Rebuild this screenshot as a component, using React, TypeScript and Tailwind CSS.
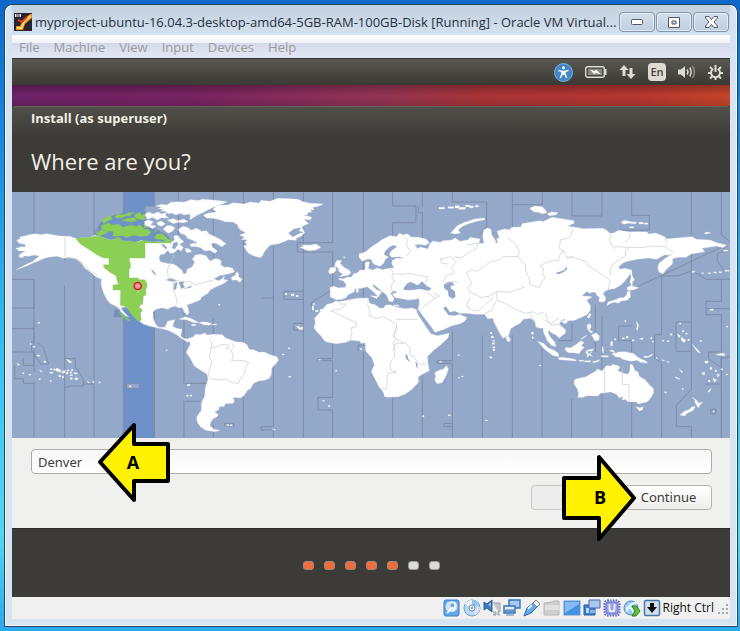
import React, { useState } from 'react';

const menuItems = ['File', 'Machine', 'View', 'Input', 'Devices', 'Help'];

// meridian strips, in map units
const meridians = [
  'M66 0V152M66 262V520H34V500M66 570V738',
  'M158 134V206M158 280V738M246 0V130M246 246V738M427 342V738M516 354V574M516 626V738',
  'M499 0V180M604 0V236M604 380V440M604 700V738M694 0V738M784 0V704H748V714H784V738',
  'M874 0V738M962 0V152H856V180H962V292L898 332V358M962 450V500H918V506H962V616H918V654H962V738',
  'M1054 0V460H1038V478M1054 478V738M1142 616V738M1142 0V42H1212V92H1142V130M1231 0V44M1219 44V62H1231V144M1231 550V738',
  'M1321 0V30H1424V104L1400 130M1321 420V506H1276V514H1321V738M1411 430V738M1501 0V110M1501 430V738M1501 38H1591V0M1590 470V738',
  'M1680 0V72H1770V0M1680 394V446H1640M1679 620V738M1859 0V70H1912V114H1822M1859 400V402H1820V446H1859V480M1859 630V738',
  'M1949 252V428H1928V498L1949 514V738M2038 0V140M2038 184V478H1992V390H2038M2038 478V592L1993 640V704H2038V738M2128 0V128L2150 146M2128 262V328H2082V368H2128V404M2128 484V738',
  'M1864 290L2136 162V176L2116 186V206L2136 238M1949 252H1996L2040 236L2084 262H2152M2084 350H2152M2128 404V740M2152 494L2128 500V528L2090 500V480H2128M2082 576H2128',
  'M0 262H66V348H0M0 410H66V450H58V475L86 516H110L94 466L74 450M0 480H66V540M8 520V560H34V574H66M158 500H190V524L214 560V576H246M158 588L176 582H214V576M518 574H586M518 628H564M748 704V714M750 318H784M816 298H874M816 298V322H874M845 394H874M845 394V414H874M1296 694H1322V704H1296ZM1750 338V480M1770 372H1770V738M1591 372L1640 404M2096 652H2112V666H2096ZM638 694H664V702H638Z',
];

const land = {
  // North America
  west: [
    'M20 150L32 146 28 141 45 138 58 134 75 131 92 134 110 131 150 138 178 139 200 146 225 142 238 144 252 136 275 141 300 150 330 147 342 154 360 153 372 158 395 151 410 158 445 155 482 158 482 180 470 184 463 192 450 194 447 205 452 216 475 221 490 222 503 230 516 241 520 251 528 251 532 238 546 231 554 216 547 208 555 196 570 193 588 197 595 207 602 214 612 206 626 207 634 214 632 224 643 232 655 231 668 235 674 245 662 250 640 255 625 267 610 270 628 267 644 259 640 268 654 271 640 281 617 291 600 300 594 310 575 321 570 330 550 338 531 345 535 357 537 369 531 375 523 362 515 352 507 354 497 349 481 352 475 358 455 353 438 358 429 366 430 385 436 402 446 412 465 412 473 394 494 389 488 409 500 415 516 418 512 438 521 445 535 448 548 441 558 446 555 454 545 451 533 456 523 450 511 443 501 435 480 423 463 418 450 415 420 409 400 402 390 395 384 378 366 370 357 358 347 349 332 354 342 367 356 381 347 378 333 366 326 354 315 347 300 340 291 329 281 309 275 292 273 277 275 268 257 260 244 248 225 235 213 218 199 207 180 203 160 205 143 199 124 200 105 204 90 211 71 218 50 228 18 240 45 225 67 215 80 205 88 198 73 195 57 199 42 198 36 204 25 198 34 190 47 183 27 183 17 175 36 170 47 171 45 163 27 160Z',
    'M404 75L415 66 430 72 444 66 455 72 470 67 466 76 476 84 454 83 442 90 428 82 413 88ZM404 94L418 90 430 96 421 105 438 108 427 116 415 108 404 112ZM437 48L455 43 470 45 483 37 505 35 522 37 540 30 560 33 577 28 603 30 630 32 651 35 638 41 620 45 605 50 590 51 572 61 556 63 545 71 522 75 512 70 498 75 485 69 475 71 465 63 452 64 461 58 445 56 455 51ZM472 90L490 86 504 92 521 88 534 94 521 98 505 97 490 101ZM440 98L452 93 466 101 455 109 444 105ZM460 118L470 107 484 107 495 114 487 124 475 130ZM505 118L520 109 535 113 543 121 560 115 575 124 589 122 598 133 613 139 632 149 648 161 635 170 618 160 603 160 608 172 622 183 614 190 600 181 585 183 572 173 554 169 561 157 548 151 533 145 526 135 511 130ZM482 158L494 150 491 138 503 136 511 146 522 155 508 163 520 172 514 183 503 178 493 188 480 190 475 182ZM525 175L538 177 545 185 530 188ZM539 160L557 158 555 169 543 170ZM664 262L675 257 680 245 687 252 684 259 696 268 690 277 680 270 666 271Z',
    'M520 362L526 361 524 370ZM507 388L526 380 545 386 562 396 548 397 530 389ZM565 399L580 395 603 401 598 406 583 402ZM545 403H557V407H545ZM608 402H619V405H608ZM626 342H630V346H626ZM84 396H89V400H84Z',
  ],
  greenland: 'M40 75L55 69 80 66 68 58 83 46 115 45 129 38 163 42 180 36 208 39 213 31 240 34 263 25 300 26 324 28 339 35 361 40 400 42 385 49 369 52 372 60 361 59 365 67 354 67 352 74 341 75 365 82 361 90 342 87 356 101 345 105 336 111 344 128 331 140 320 143 318 151 295 149 282 155 266 161 241 165 226 181 217 198 210 203 185 195 174 188 166 176 161 168 171 165 165 155 174 149 154 149 163 142 149 135 167 128 153 121 145 113 143 104 128 96 105 95 89 89 70 85 49 84ZM0 29L30 32 60 30 105 38 86 46 60 56 37 69 22 75 0 89Z',
  eurasia: [
    'M420 292L432 289 445 294 467 292 468 283 460 272 447 269 447 265 460 267 470 262 485 261 491 251 503 248 510 240 521 241 526 236 525 220 530 215 539 216 537 223 535 236 548 240 561 234 578 239 600 234 612 234 605 220 608 211 619 205 641 205 629 200 604 202 598 192 606 181 622 170 610 165 598 171 586 182 581 193 595 201 586 207 582 218 571 229 560 226 550 221 543 207 530 208 517 214 507 202 507 192 527 185 544 171 558 162 578 148 600 137 620 140 628 130 640 135 651 131 664 141 685 142 708 147 718 158 708 166 687 163 674 165 683 176 690 171 714 177 719 162 729 153 750 157 760 152 785 150 796 144 810 154 835 149 840 142 870 147 867 160 882 160 878 139 881 120 892 114 903 118 905 134 916 151 918 160 923 157 920 146 928 143 921 124 943 117 958 119 966 112 993 111 996 101 1020 97 1051 92 1058 95 1087 82 1120 87 1151 92 1153 99 1133 109 1165 113 1178 116 1238 115 1250 121 1259 130 1271 129 1286 121 1320 126 1342 125 1371 126 1376 132 1397 129 1425 141 1431 147 1460 144 1506 140 1519 148 1560 150 1580 158 1609 165 1599 173 1580 168 1561 171 1536 175 1544 185 1527 188 1505 191 1488 202 1463 202 1448 206 1447 222 1430 237 1418 252 1407 246 1403 233 1407 220 1424 206 1449 191 1436 196 1425 194 1410 202 1400 208 1374 204 1343 208 1312 214 1298 220 1285 232 1291 237 1308 235 1320 242 1319 254 1304 274 1292 286 1273 296 1260 298 1246 303 1239 311 1247 323 1245 333 1235 337 1226 334 1229 322 1219 315 1219 309 1209 306 1198 310 1192 304 1182 311 1176 318 1196 319 1206 321 1190 331 1202 348 1200 362 1191 374 1171 383 1154 391 1133 392 1121 387 1112 394 1109 403 1127 420 1126 429 1112 440 1108 444 1098 435 1084 428 1077 421 1074 428 1083 444 1094 456 1098 470 1084 466 1073 454 1061 428 1059 414 1049 415 1037 410 1035 394 1021 385 1000 388 990 400 975 407 962 416 956 436 939 445 930 431 921 413 912 397 909 385 893 386 884 373 857 373 830 370 809 370 794 363 780 366 767 348 760 355 769 367 775 376 795 377 809 373 831 383 824 394 810 401 786 407 759 419 735 427 722 408 711 394 696 374 684 358 688 344 687 325 676 328 655 330 630 325 616 323 607 313 622 306 613 302 601 310 612 324 609 335 597 334 590 315 572 301 552 284 547 287 560 299 576 306 571 311 565 321 556 311 543 299 532 290 514 295 496 296 492 306 474 314 467 324 456 328 440 329 421 321Z',
    'M436 219L441 211 455 212 450 220 464 234 474 238 483 247 476 255 448 260 459 252 446 244 445 234 434 229ZM415 246L420 234 435 231 439 240 431 249 419 251ZM330 172L343 168 335 165 360 166 378 162 392 172 378 180 356 182 342 177ZM499 293H505V307H499ZM541 317L564 319 560 326ZM612 345H627V348H612ZM461 200H464V204H461Z',
  ],
  africa: 'M437 333L448 335 470 331 502 325 535 324 539 340 555 344 570 355 581 354 586 346 599 344 620 351 644 356 666 354 680 359 680 367 696 392 709 412 723 432 743 437 778 430 773 445 751 465 731 481 712 500 714 520 718 542 704 549 684 561 686 576 666 598 646 612 624 620 595 622 584 620 580 606 567 590 557 571 544 545 553 525 546 504 527 483 526 459 513 460 509 453 482 451 469 457 439 461 420 458 405 454 391 436 379 424 372 413 376 397 373 386 388 368 398 358 411 343 426 340Z',
  south: 'M-4 84L8 84 16 73 30 74 45 69 51 75 73 73 97 74 106 83 122 90 140 96 159 97 171 104 177 118 190 119 208 127 223 126 240 134 260 140 266 150 258 161 245 174 244 194 238 205 223 211 205 213 189 221 182 236 173 240 161 258 151 264 129 262 133 275 129 280 106 281 103 289 88 290 86 299 74 305 85 314 80 321 69 326 61 338 60 347 72 358 90 361 77 365 47 361 31 350 22 336 20 321 34 301 34 280 44 258 46 234 54 208 51 192 34 182 13 168 4 150 -6 135 -11 127 -6 117 1 103Z',
};

const pacificLand = [
  'M522 212L528 207 558 200 573 191 587 184 592 176 604 183 611 178 619 167 634 168 637 163 657 168 659 174 653 182 674 191 685 193 690 181 690 165 695 162 701 171 704 181 714 186 718 199 736 210 748 225 760 235 761 248 750 267 740 276 714 282 710 276 683 275 676 268 666 270 669 258 658 264 650 253 632 246 602 250 592 258 560 257 549 262 534 262 536 250 531 235 524 225ZM708 290L720 293 730 290 727 299 718 303Z',
  'M876 262L889 270 895 279 909 277 900 284 895 294 886 280 884 269ZM886 290L878 302 862 309 854 318 840 315 853 304 867 299 876 290ZM140 167L145 178 139 196 126 218 111 221 104 210 107 199 104 188 117 181 130 177ZM318 82L324 77 332 89 327 95 321 92Z',
  'M413 94L430 100 445 114 463 121 476 131 476 140 458 136 434 118ZM474 144L486 142 517 146 529 150 527 153 501 151 478 149ZM497 112L511 114 529 103 543 92 552 98 543 107 553 112 542 123 538 131 519 128 505 128 495 119ZM556 127L561 121 582 116 576 123 561 124 567 132 577 125 571 132 578 140 568 135 561 143 562 132ZM536 151H551V154H538ZM554 152H572V156H554ZM577 155L599 149 596 154 581 159ZM628 122L639 120 646 130 656 126 675 125 702 131 712 141 725 148 737 153 743 159 721 157 711 151 695 154 680 151 668 148 660 142 646 140 641 134 635 132 645 128ZM561 45L570 41 574 51 568 60 579 66 572 69 563 58ZM574 76L588 68 598 78 597 90 585 93 578 80ZM561 22L570 9 573 15 567 25ZM483 34L499 29 504 34 496 42ZM731 139L745 139 756 132 757 136 746 142 734 143ZM542 87L560 75 559 78 546 88ZM608 108L611 120 609 131 606 120ZM604 137H625V141H604Z',
  'M271 67H276V72H271ZM274 78H280V84H274ZM278 91H284V94H278ZM276 98H284V103H276ZM278 110H285V114H278ZM279 117H284V122H279ZM269 140H276V144H269ZM119 154H124V157H119ZM174 134H178V137H174ZM174 202H178V205H174ZM184 198H190V200H184ZM68 317H72V320H68ZM144 314H151V317H144ZM256 330H263V332H256ZM418 165H423V168H418ZM395 66H400V73H395ZM396 80H400V86H396ZM709 34L716 45 712 62 709 56 712 48ZM674 31H678V35H674ZM632 95H638V107H632ZM643 86H648V90H643ZM667 83H673V87H667ZM678 79H685V84H678ZM696 89H702V93H696ZM718 87L730 83 727 89ZM752 82H756V87H752ZM757 93H761V97H757ZM787 90H791V94H787ZM802 92H807V96H802ZM838 39H843V43H838Z',
  'M831 71L842 78 837 83ZM811 71H816V76H811ZM847 61H852V66H847ZM857 69H862V73H857ZM844 82L857 90 853 98 844 91ZM863 87H868V92H863ZM898 92L906 91 903 96ZM876 103L889 115 902 129 893 126ZM948 134L962 130 975 131 973 137 957 136ZM979 48H983V52H979ZM915 153H924V159H915ZM907 187H914V194H907ZM930 172H936V178H930ZM945 180H950V185H945ZM951 192L959 194 953 202ZM938 205L950 210 943 216ZM963 176H969V179H963ZM978 192H984V195H978ZM925 210H930V216H925ZM846 235H850V239H846ZM794 245H799V249H794ZM923 244L934 235 928 247ZM825 200L840 206 838 208 827 204ZM838 177L848 186 845 188ZM801 153L808 157 803 158ZM786 148L794 152 789 153ZM768 142L773 144 770 147ZM939 303H943V306H939Z',
];

const arcticLand =
  'M152 129L161 119 171 108 190 98 207 93 223 87 253 84 255 89 233 93 205 101 188 109 174 120 182 129 165 132 151 129ZM117 52H133V57H117ZM144 50H161V55H144ZM165 47H178V54H165ZM176 52H196V58H176ZM196 45H209V50H196ZM208 48H220V53H208ZM226 46H235V51H226ZM389 55L405 48 427 50 437 61 441 68 427 71 414 67 401 65ZM442 71L455 66 474 68 466 75 448 77ZM663 97L673 91 692 95 711 97 706 101 685 100 672 103ZM717 97H730V102H717ZM733 99H744V103H733ZM689 110H701V114H689ZM912 130L922 126 932 129 918 132ZM685 237L695 240 697 259 704 270 698 274 696 290 690 276 694 260ZM681 293L691 287 704 290 717 293 705 298 695 301 682 300ZM683 304L690 303 691 321 681 331 663 333 656 340 646 337 633 339 620 347 624 336 644 330 660 323 671 323 680 314ZM604 322L614 319 615 333 602 334ZM877 242L886 245 877 248ZM904 248H912V250H904ZM925 248H932V251H925ZM941 246H949V249H941ZM957 245H965V248H957ZM974 241H988V244H974ZM930 357H940V361H930ZM970 180H984V183H970Z';

const greenZone = [
  'M198 146L225 142 238 144 252 138 275 141 300 150 330 147 342 154 360 153 380 157 400 151 430 156 460 155 470 147 483 149V159H405V204H357L361 221 361 236 357 237V264H386V269H404L411 281V289L407 300 408 314 400 319 398 343H394L387 351 398 361 391 369 394 390 385 395 366 374 347 349 331 346 332 300H309V285L326 283 322 275 318 257 300 247 281 232V224H297V205L281 204 263 196 238 179 212 163Z',
  'M275 88L290 83 302 75 306 89 292 92 281 101ZM313 80L325 72 342 74 356 68 374 66 364 72 359 79 348 77 337 83 322 85ZM375 73L390 66 394 76 405 70 403 91 387 88 374 84ZM333 91L352 85 372 83 381 92 364 96 345 93ZM273 107L296 98 306 105 326 102 337 112 362 106 380 109 389 104 404 117 414 118 424 127 412 138 388 139 371 136 351 143 339 137 307 139 312 125 290 123 275 116ZM261 129L275 119 297 125 284 132 264 140ZM402 103L412 110 403 113ZM433 122L440 121 438 128ZM440 132L457 131 468 141 476 149 462 150 444 148 432 144ZM315 142L330 143 335 151 318 150ZM351 154L367 157 373 163 357 159ZM325 366L335 371 351 385 360 390 355 393 338 381Z',
];

const americaBorders = [
  'M165 138V202L195 205 218 218 230 233 245 245 263 257M484 190L492 197 478 225 472 240 475 265 492 268 489 300 495 311 502 336 497 347M492 268L512 275 540 275 558 284 580 278 610 270',
  'M600 448L606 463 603 475 598 500 606 515 600 535 595 550 600 566 625 570 650 568 666 578 686 580 690 567 704 553 704 540 716 517 700 512 665 512 670 497 663 481 673 471 665 459M600 475L618 471 636 463 655 465 648 478 660 472',
];

const eurasiaBorders =
  'M422 362L445 372 470 385 500 399 497 411 482 414 486 430 480 452M448 342L468 342 455 355 425 362M535 325L533 345 540 370 535 376 560 385 580 380 620 403 618 422 608 436 618 447 609 459 615 480 613 502 600 518 602 540 620 547 592 550 590 596 575 594M618 388H683M620 405L612 440 632 455 650 461 660 475 659 493 672 501 686 522 709 523M640 460L618 459 608 483M600 234L610 248 605 262 612 275 603 289 608 308M610 252L640 253 660 250 682 256 712 260 708 278M643 140L652 150 650 166 660 185 651 198M700 300L720 313 735 325 748 318 730 307M735 325L700 350 686 368M760 286L778 279 792 274 805 279M750 208L782 200 798 217 785 231 793 248 770 257 758 278M752 203L755 220 775 222M830 165L865 159 858 176 829 192 815 203 790 201M833 292L846 283 838 266 830 248 845 239 861 244 891 223 900 215 929 210 940 200 985 200 988 184 975 161 952 140M985 200L998 218 1007 223 1008 246 1018 266 1019 283 1032 289 1050 292 1056 274 1065 265 1058 250 1060 235 1050 228 1065 219 1093 211 1104 213 1111 190 1122 184 1108 175 1111 150 1140 143 1148 120 1140 113M1118 180L1130 200 1160 205 1190 215 1195 227 1215 240 1242 257 1260 271 1255 300M1150 198L1130 207M1005 290L982 299 960 306 920 305 900 318 875 323 839 305 833 292M920 305L921 331 946 340 981 361 1010 370 1030 365 1042 373 1060 367M1018 370L1032 393 1039 412M1060 388L1081 402 1108 384M1265 133L1258 150 1272 175 1280 170 1315 172 1307 182 1306 197 1280 215 1267 224 1260 240 1263 257M1320 130L1317 145 1306 158M1315 172L1353 173 1390 168 1428 170 1440 181 1450 188M1425 142L1430 160M834 350L845 361 865 363 890 340 909 325M840 323L830 345 838 360M884 372L905 360 918 335';

const captionButton =
  'flex h-5 w-9 items-center justify-center rounded-sm border border-[#8394ac] bg-gradient-to-b from-[#d3deeb] to-[#bdcfe1] shadow-[inset_0_0_0_1px_rgba(255,255,255,0.55)]';

function WorldMap() {
  return (
    <svg viewBox="0 0 2154 738" className="block w-full bg-[#94a8c9]" role="img" aria-label="Time zone map">
      <path
        fill="#6d91c8"
        d="M334 0H427V42H398V106L434 114 464 129 476 144V152H246L264 94 294 74 334 64ZM334 350H427V738H334ZM307 354H427V374H307Z"
      />
      <g fill="none" stroke="#7e8da8" strokeWidth="3">
        {meridians.map((d) => (
          <path key={d} d={d} />
        ))}
        <path d="M334 0V64L294 74 264 94 246 130M427 0V42H398V106L434 114 464 129 476 144M334 374V738M427 392V738M334 374H307V354H334" />
      </g>
      <path fill="#94a8c9" stroke="#7e8da8" strokeWidth="3" d="M344 574H382V590H344Z" />
      <g fill="#fff" stroke="#e5ecf3" strokeWidth="1" fillRule="evenodd">
        <g transform="translate(-6 -6)">
          {land.west.map((d) => (
            <path key={d} d={d} />
          ))}
        </g>
        <g transform="translate(534 -6)">
          <path d={land.greenland} />
          {land.eurasia.map((d) => (
            <path key={d} d={d} />
          ))}
          <path d={land.africa} />
        </g>
        <g transform="translate(534 354)">
          <path d={land.south} />
          <path d="M0 31L15 32 25 38 10 37ZM32 39L50 36 66 42 53 45 40 44ZM320 50L326 48 330 53 339 51 337 59 328 58ZM295 113H300V116H295ZM277 132H282V135H277ZM296 199H303V202H296ZM386 148H391V151H386ZM436 181H441V184H436ZM398 271H403V274H398ZM415 286H420V290H415ZM698 317H702V321H698ZM511 115H516V119H511ZM366 -12H371V0H366ZM376 1H385V5H376ZM390 -2H396V4H390ZM285 -50H291V-46H285ZM303 -48H312V-43H303ZM318 -44H325V-40H318ZM370 -20H374V-15H370ZM110 344H117V347H110ZM120 344H127V347H120ZM247 357L257 359 252 361Z" />
        </g>
        <g transform="translate(1164 354)">
          {pacificLand.map((d) => (
            <path key={d} d={d} />
          ))}
        </g>
        <path transform="translate(1164 -6)" d={arcticLand} />
        {/* Polynesia */}
        <path
          transform="translate(-6 354)"
          d="M20 159L28 163 26 167ZM60 100H64V104H60ZM70 108H75V112H70ZM81 135H89V139H81ZM102 153H107V158H102ZM38 188H42V192H38ZM57 192H62V196H57ZM88 180L97 184 94 187ZM87 206H91V210H87ZM120 176H127V179H120ZM119 187H129V190H119ZM120 211H124V215H120ZM129 176L138 178 135 182ZM138 174L147 177 154 182 150 187 138 182ZM157 184L166 181 165 188 155 189ZM169 148L177 150 186 157 178 158ZM146 196H153V200H146ZM156 199H161V203H156ZM168 187H174V192H168ZM172 179H177V184H172ZM180 185H185V190H180ZM184 178H189V182H184ZM181 194H187V198H181ZM192 188H202V192H192ZM181 203H187V208H181ZM195 203H203V209H195ZM232 213L240 218 234 218ZM248 214H252V218H248ZM267 215H271V219H267ZM358 227H363V231H358ZM468 119H472V122H468ZM532 223H540V227H532ZM530 255H535V259H530ZM541 255H546V259H541Z"
        />
      </g>
      <g fill="#8ccf55" stroke="#83bb60" strokeWidth="1" transform="translate(-6 -6)">
        {greenZone.map((d) => (
          <path key={d} d={d} />
        ))}
      </g>
      {/* Lakes and inland seas */}
      <g fill="#94a8c9">
        <path
          transform="translate(-6 -6)"
          d="M422 236L430 242 437 251 438 257 429 249ZM466 270L484 265 501 273 489 275ZM494 278L503 277 498 298 490 301ZM506 276L523 275 519 283 525 291 514 297ZM519 297L535 291 548 285 541 293ZM612 266L635 254 640 263 626 272ZM489 160L500 155 505 163 494 178 486 174ZM500 134L519 134 529 139 518 144ZM445 158L452 165 461 163 472 173 469 178ZM524 150L539 150 554 159 531 164Z"
        />
        <path
          transform="translate(534 -6)"
          d="M640 296L650 281 661 276 672 280 680 286 689 282 693 276 682 276 698 275 710 288 724 295 718 302 690 297 662 301 643 300ZM762 283L774 276 786 275 794 286 783 287 782 295 794 303 797 320 787 326 776 319 773 302 762 294ZM1096 249L1113 244 1122 241 1129 229 1131 238 1120 247 1106 253ZM646 493L652 495 655 507 663 518 656 513 648 506ZM676 515L682 520 683 535 679 531ZM295 130L312 116 335 113 326 122 341 127 326 131 309 141Z"
        />
      </g>
      <g fill="none" stroke="#c3cbc8" strokeWidth="2">
        {americaBorders.map((d) => (
          <path key={d} transform="translate(-6 -6)" d={d} />
        ))}
        <path transform="translate(534 -6)" d={eurasiaBorders} />
        <path transform="translate(1164 354)" d="M614 178V246M667 171V223H687V276M484 53L478 43 455 46 445 33 436 10" />
      </g>
      <path d="M374 289L378 306 382 289Z" fill="#d5dfd0" />
      <circle cx="377" cy="282" r="11" fill="#f17b82" stroke="#c51f28" strokeWidth="4" />
      <path d="M371 280H383M373 285H382" stroke="#fbb8b8" strokeWidth="3" />
    </svg>
  );
}

function SystemTray() {
  return (
    <div className="flex items-center gap-3 pr-[7px] text-[#dfdbd2]">
      <button type="button" aria-label="Accessibility">
        <svg width="19" height="19" viewBox="0 0 19 19">
          <circle cx="9.5" cy="9.5" r="9" fill="#4186c8" stroke="#7eb0df" />
          <circle cx="9.5" cy="4.8" r="1.5" fill="#fff" />
          <path d="M4.5 7.5L8 8.2V11L6.3 15M14.5 7.5L11 8.2V11L12.7 15" fill="none" stroke="#fff" strokeWidth="1.4" />
          <path d="M7.8 7.8H11.2V12H7.8Z" fill="#fff" />
        </svg>
      </button>
      <button type="button" aria-label="Battery">
        <svg width="22" height="12" viewBox="0 0 22 12">
          <rect x=".7" y=".7" width="18.6" height="10.6" rx="2" fill="none" stroke="currentColor" strokeWidth="1.4" />
          <path d="M20 3H21.5V9H20Z" fill="currentColor" />
          <path d="M3 3H17V9H3Z" fill="#8b8983" />
          <path d="M5 3.5L10 5.2 11 3.5 16 8.5 10.5 6.8 9.5 8.5Z" fill="#fff" />
        </svg>
      </button>
      <button type="button" aria-label="Network">
        <svg width="17" height="16" viewBox="0 0 17 16" fill="currentColor">
          <path d="M5 1L9.5 6H6.5V12H3.5V6H.5ZM12 15L7.5 10H10.5V4H13.5V10H16.5Z" />
        </svg>
      </button>
      <button type="button" className="flex h-[18px] w-[18px] items-center justify-center rounded-sm bg-[#dfdbd2] text-[11px] font-semibold text-[#44433d]">
        En
      </button>
      <button type="button" aria-label="Volume">
        <svg width="18" height="14" viewBox="0 0 18 14" fill="none" stroke="currentColor" strokeWidth="1.5">
          <path d="M0 4.5H3L7 1V13L3 9.5H0Z" fill="currentColor" stroke="none" />
          <path d="M9 4.5Q11 7 9 9.5M11.7 2.5Q14.7 7 11.7 11.5" />
          <path d="M14.4 1Q18.5 7 14.4 13" stroke="#8d8a83" />
        </svg>
      </button>
      <button type="button" aria-label="Session">
        <svg width="15" height="15" viewBox="0 0 15 15" fill="none" stroke="currentColor">
          <path d="M7.5 0V7" strokeWidth="2" />
          <path d="M5.3 3.8A4.5 4.5 0 1 0 9.7 3.8" strokeWidth="2" />
          <path d="M2 2L4 4M13 2L11 4M0 8H3M12 8H15M2 13.5L4.2 11.3M13 13.5L10.8 11.3M7.5 12V15" strokeWidth="2" />
        </svg>
      </button>
    </div>
  );
}

function StatusIcons() {
  return (
    <div className="flex items-center gap-[2px]">
      <svg width="18" height="18" viewBox="0 0 18 18">
        <rect x="1" y="1" width="15" height="16" rx="2" fill="#69a6e5" stroke="#397fc7" />
        <ellipse cx="8.5" cy="7.5" rx="6" ry="5.5" fill="#cfe4f7" />
        <circle cx="9.5" cy="6.5" r="2" fill="#69a6e5" />
        <path d="M4 14L10 8M11 3Q14 7 10 12" stroke="#fff" strokeWidth="1.6" fill="none" />
      </svg>
      <svg width="18" height="18" viewBox="0 0 18 18">
        <circle cx="9" cy="9" r="8" fill="#b9d9f4" stroke="#6a9fce" />
        <path d="M9 9L2 5Q5 1 9 1Z" fill="#f5f8ff" />
        <path d="M9 9L17 8Q17 14 12 16Z" fill="#e6dcf4" />
        <path d="M9 9L9 1Q14 1 16 5Z" fill="#94c3ef" />
        <circle cx="9" cy="9" r="3" fill="#fff" stroke="#5b91c9" />
        <circle cx="9" cy="9" r="1" fill="#548dc7" />
      </svg>
      <svg width="18" height="18" viewBox="0 0 18 18">
        <path d="M10 4H17V13H15V16H17M10 13H13V16H10" fill="#c5c7ca" stroke="#a0a3a7" />
        <path d="M1 3L4 5 9 1V13L4 9 1 11Z" fill="#3c7bbd" stroke="#2c609a" />
        <path d="M5 5.5L8 3.5V8Z" fill="#8cbbe8" />
      </svg>
      <svg width="18" height="18" viewBox="0 0 18 18">
        <path d="M6 1H17V9H6Z" fill="#a4cbf2" stroke="#3471b5" strokeWidth="1.4" />
        <path d="M1 7H12V14H1Z" fill="#dceaf8" stroke="#3471b5" strokeWidth="1.4" />
        <path d="M2 11H11V13H2ZM3 16H11" fill="#73aae2" stroke="#4d82b9" />
      </svg>
      <svg width="18" height="18" viewBox="0 0 18 18">
        <path d="M1 17L4 9 10 4 14 8 8 14Z" fill="#65aae6" stroke="#2e6dae" />
        <path d="M10 4L13 1 17 5 14 8Z" fill="#f4f5f5" stroke="#888" />
        <path d="M5 10L9 6" stroke="#d0ecff" strokeWidth="2" />
      </svg>
      <svg width="18" height="18" viewBox="0 0 18 18">
        <path d="M1 4L9 3 10 2H16V16H1Z" fill="#cfcfcf" stroke="#b8b8b8" />
        <path d="M2 6H16V11H2Z" fill="#e1e1e1" />
      </svg>
      <svg width="18" height="18" viewBox="0 0 18 18">
        <rect x="1" y="2" width="16" height="14" fill="#4590df" stroke="#5d98d5" />
        <path d="M2 14L16 5V3H2Z" fill="#86baf0" />
      </svg>
      <svg width="18" height="18" viewBox="0 0 18 18">
        <path d="M1 6H12V16H1Z" fill="#3f7ecb" stroke="#245d9c" />
        <path d="M3 9H6V14H3Z" fill="#b4daff" />
        <path d="M6 1H17V9H6Z" fill="#a7c8ef" stroke="#5366b0" />
        <path d="M7 11H12V14H7Z" fill="#84b6ec" />
      </svg>
      <svg width="18" height="18" viewBox="0 0 18 18">
        <rect x="1.5" y="1.5" width="15" height="15" rx="3" fill="none" stroke="#5863c4" strokeWidth="2" strokeDasharray="1.5 1.2" />
        <rect x="3" y="3" width="12" height="12" rx="2" fill="#98a3e6" stroke="#5a68cb" />
        <path d="M6.5 5V10Q6.5 12.5 9 12.5T11.5 10V5" fill="none" stroke="#fff" strokeWidth="1.6" />
      </svg>
      <svg width="18" height="18" viewBox="0 0 18 18">
        <circle cx="8" cy="9" r="7" fill="#9bcef2" stroke="#4d88c4" />
        <path d="M4 13Q5 4 14 4M3 9Q10 7 11 15" fill="none" stroke="#eaf7ff" strokeWidth="2" />
        <path d="M9 7H13L17 12 13 17H9L12 12Z" fill="#62c034" stroke="#2c7c1a" />
      </svg>
      <svg width="18" height="18" viewBox="0 0 18 18">
        <rect x="1.5" y="1.5" width="15" height="15" rx="1.5" fill="#cfe1ef" stroke="#477aa6" strokeWidth="1.5" />
        <path d="M7 4H11V8H14L9 14 4 8H7Z" fill="#111" />
      </svg>
    </div>
  );
}

export default function App() {
  const [city, setCity] = useState('Denver');
  const currentStep = 5;

  return (
    <div className="flex min-h-screen flex-col bg-[linear-gradient(to_bottom,#0d68c8,#1687e0_20%,#35c1f2_55%,#52d7f2_85%,#2ba9ee)] py-1 pr-[2px] pl-1 font-['Open_Sans','Noto_Sans',sans-serif]">
      <div className="flex flex-1 flex-col rounded-t-lg border border-[#27425f] bg-[#d6e3f1] px-[7px] pb-[7px] shadow-[inset_0_0_0_1px_#f4f9fd]">
        {/* Title bar */}
        <header className="flex h-[30px] items-center bg-gradient-to-b from-[#c2d0de] to-[#d4e1ee] pt-1">
          <svg width="18" height="18" viewBox="0 0 18 18" className="mr-[3px] ml-[2px] shrink-0">
            <rect width="18" height="18" fill="#2a2430" />
            <path d="M3 6Q7 10 10 6L16 1H18V5L11 11 9 17H2V13H6L8 9Z" fill="#f08c20" />
            <path d="M9 8L17 2V4L11 9 8 16H3V14H7Z" fill="#ffe06c" />
            <path d="M1 1H7V4H1Z" fill="#e8e8ef" />
            <path d="M3 1V4M5 1V4" stroke="#333" />
            <path d="M4 7L8 9 13 4" fill="none" stroke="#d3411d" strokeWidth="2" />
          </svg>
          <h1 className="min-w-0 flex-1 overflow-hidden text-[13px] leading-5 whitespace-nowrap text-[#26313d]">
            myproject-ubuntu-16.04.3-desktop-amd64-5GB-RAM-100GB-Disk [Running] - Oracle VM Virtual...
          </h1>
          <div className="flex gap-px pr-px">
            <button type="button" aria-label="Minimize" className={captionButton}>
              <svg width="12" height="6" viewBox="0 0 12 6">
                <rect x=".5" y=".5" width="11" height="5" rx="1" fill="#fff" stroke="#52596a" />
              </svg>
            </button>
            <button type="button" aria-label="Maximize" className={captionButton}>
              <svg width="12" height="11" viewBox="0 0 12 11">
                <path fillRule="evenodd" d="M.5 .5H11.5V10.5H.5ZM4 4V7H8V4Z" fill="#fff" stroke="#52596a" />
              </svg>
            </button>
            <button type="button" aria-label="Close" className={captionButton}>
              <svg width="13" height="12" viewBox="0 0 13 12">
                <path d="M.5 .5H4L6.5 3.5 9 .5H12.5V2L9 6 12.5 10V11.5H9L6.5 8.5 4 11.5H.5V10L4 6 .5 2Z" fill="#fff" stroke="#52596a" />
              </svg>
            </button>
          </div>
        </header>

        <nav className="flex h-[23px] items-center gap-[14px] bg-[linear-gradient(to_bottom,#fff,#eef1f9_35%,#d5daeb_36%,#e3e6f4)] px-[7px] pt-[2px] text-[13px] text-[#9b9b9f]">
          {menuItems.map((item) => (
            <button key={item} type="button">
              {item}
            </button>
          ))}
        </nav>

        {/* Guest desktop */}
        <div className="flex h-[27px] items-center justify-end border-t border-[#33322e] bg-gradient-to-b from-[#595852] to-[#3a3934]">
          <SystemTray />
        </div>
        <div className="h-[21px] bg-[linear-gradient(to_bottom,rgba(0,0,0,0.25),transparent_50%,rgba(0,0,0,0.12)),linear-gradient(to_right,#6e2269,#782461_25%,#953453_52%,#a93438_65%,#b63630_87%,#c5452b)]" />

        <main className="flex flex-1 flex-col bg-[#3c3b37]">
          <div className="h-[86px] rounded-t border-t border-[#65635c] bg-[linear-gradient(to_bottom,#504f49,#3c3b37_30px)] px-[19px] text-[#f4f0e6]">
            <p className="pt-[3px] text-[13px] leading-4 font-bold">Install (as superuser)</p>
            <h2 className="mt-[21px] text-[22px] leading-7">Where are you?</h2>
          </div>

          <WorldMap />

          <form className="relative bg-[#f0f0ef] pt-[11px] pr-[18px] pb-[18px] pl-[19px]" onSubmit={(e) => e.preventDefault()}>
            <input
              aria-label="Location"
              value={city}
              onChange={(e) => setCity(e.target.value)}
              className="block h-[25px] w-full rounded border border-[#adadab] bg-gradient-to-b from-[#f7f7f7] to-white px-[6px] font-['Noto_Sans',sans-serif] text-[13px] text-[#3c3c3c] outline-none"
            />
            <div className="mt-[11px] flex justify-end gap-[6px] font-['Noto_Sans',sans-serif] text-[13px] text-[#3c3c3c]">
              <button type="button" className="h-[25px] w-[88px] rounded border border-[#c6c5c3] bg-[#ededed] text-[#e1ad91]">
                Back
              </button>
              <button type="submit" className="h-[25px] w-[87px] rounded border border-[#b5b4b1] bg-gradient-to-b from-white to-[#eeeeed]">
                Continue
              </button>
            </div>

            {/* Step markers */}
            <svg width="76" height="82" viewBox="0 0 76 82" className="absolute -top-4 left-[83px]">
              <path d="M5 40L39 3V22H73V59H39V78Z" fill="#fff200" stroke="#000" strokeWidth="4" strokeLinejoin="round" />
              <text x="38" y="47" textAnchor="middle" fontSize="18" fontWeight="700">
                A
              </text>
            </svg>
            <svg width="77" height="90" viewBox="0 0 77 90" className="absolute top-4 right-[92px] z-10">
              <path d="M73 44L38 3V24H3V64H38V85Z" fill="#fff200" stroke="#000" strokeWidth="4" strokeLinejoin="round" />
              <text x="39" y="50" textAnchor="middle" fontSize="18" fontWeight="700">
                B
              </text>
            </svg>
          </form>

          <div className="flex min-h-[69px] flex-1 items-center justify-center gap-[10px] border-t border-[#2f2e2b] pt-1">
            {Array.from({ length: 7 }, (_, step) => (
              <span
                key={step}
                className={`h-[9px] w-[11px] rounded-[3px] border ${
                  step < currentStep ? 'border-[#a1887b] bg-[#ee6c3e]' : 'border-[#999994] bg-[#dedddb]'
                }`}
              />
            ))}
          </div>
        </main>

        <footer className="flex h-[22px] items-center justify-end gap-[2px] bg-[#f0f0f0] text-[12px] text-[#111]">
          <StatusIcons />
          <span>Right Ctrl</span>
          <svg width="14" height="16" viewBox="0 0 14 16" className="text-[#a8a8a8]" fill="currentColor">
            <path d="M10 4H12V6H10ZM6 8H8V10H6ZM10 8H12V10H10ZM2 12H4V14H2ZM6 12H8V14H6ZM10 12H12V14H10Z" />
          </svg>
        </footer>
      </div>
    </div>
  );
}
